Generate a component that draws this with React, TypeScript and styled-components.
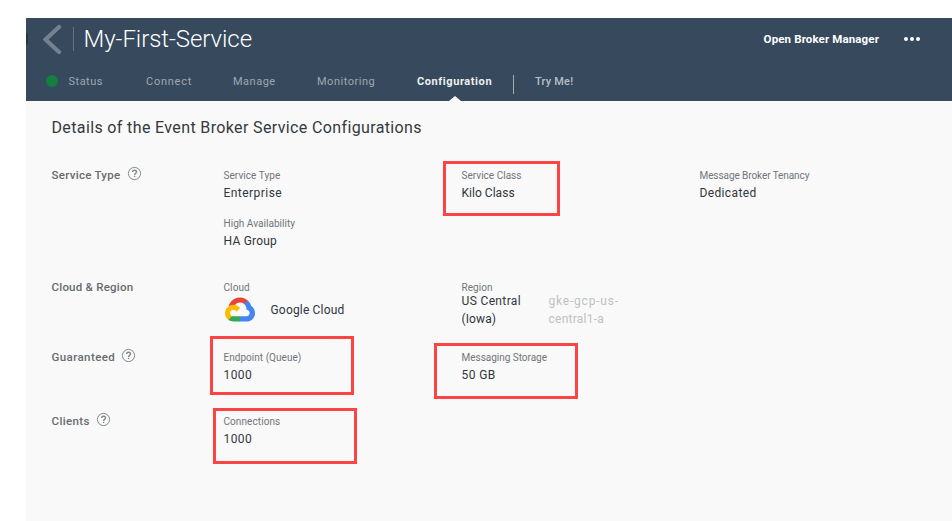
import React from "react";
import styled, { createGlobalStyle } from "styled-components";

const GlobalStyle = createGlobalStyle`
  * { box-sizing: border-box; }
  body { margin: 0; background: #fff; font-family: Roboto, "Open Sans", sans-serif; }
`;

const Page = styled.div`
  height: 521px;
  padding: 18px 0 0 26px;
  overflow: hidden;
  display: flex;
  flex-direction: column;
`;

const Header = styled.header`
  position: relative;
  flex: 0 0 83px;
  background: #36495d;
`;

const HandleDot = styled.span`
  position: absolute;
  left: 0;
  top: 15px;
  width: 2px;
  height: 12px;
  border-radius: 0 2px 2px 0;
  background: #2f3439;
`;

const TitleBar = styled.div`
  display: flex;
  align-items: center;
  height: 42px;
  padding: 0 32px 0 17px;
`;

const BackIcon = styled.svg`
  width: 19px;
  height: 30px;
  flex: none;
  fill: none;
  stroke: #738292;
  stroke-width: 4.2;
  stroke-linecap: round;
`;

const TitleRule = styled.span`
  width: 1px;
  height: 24px;
  margin: 0 9.5px 0 11px;
  background: #65727f;
`;

const Title = styled.h1`
  margin: 0;
  font-size: 24px;
  line-height: 30px;
  font-weight: 300;
  letter-spacing: -0.06px;
  color: #fff;
  white-space: nowrap;
`;

const ManagerLink = styled.a`
  margin-left: auto;
  font-size: 11.5px;
  line-height: 16px;
  font-weight: 700;
  letter-spacing: 0.13px;
  color: #fff;
  white-space: nowrap;
`;

const MoreIcon = styled.svg`
  width: 16px;
  height: 4px;
  margin-left: 25px;
  fill: #fff;
`;

const Tabs = styled.nav`
  display: flex;
  align-items: center;
  height: 41px;
  padding-left: 20px;
`;

const StatusDot = styled.span`
  width: 12px;
  height: 12px;
  margin: 1px 10.5px 0 0;
  border-radius: 50%;
  background: #13803d;
`;

const Tab = styled.a<{ $w: number; $ls: number; $tone?: "active" | "bright" }>`
  position: relative;
  flex: 0 0 ${(p) => p.$w}px;
  height: 100%;
  padding-top: 1px;
  font-size: 11px;
  line-height: 42px;
  letter-spacing: ${(p) => p.$ls}px;
  font-weight: ${(p) => (p.$tone === "active" ? 700 : p.$tone === "bright" ? 500 : 400)};
  color: ${(p) => (p.$tone === "active" ? "#eef0f2" : p.$tone === "bright" ? "#b9bfc5" : "#a0a7ae")};
  white-space: nowrap;
`;

const Caret = styled.svg`
  position: absolute;
  left: 32px;
  bottom: 0;
  width: 12px;
  height: 5px;
  fill: #f9f9f9;
`;

const TabRule = styled.span`
  width: 1px;
  height: 19px;
  margin: 7px 21px 0 0;
  background: #a3acb5;
`;

const Content = styled.main`
  flex: 1;
  padding: 17px 0 0 25.5px;
  background: #f9f9f9;
`;

const Heading = styled.h2`
  margin: 0 0 30px;
  font-size: 16px;
  line-height: 20px;
  font-weight: 400;
  letter-spacing: 0.365px;
  color: #333940;
`;

const Section = styled.section<{ $h: number }>`
  display: flex;
  height: ${(p) => p.$h}px;
`;

const SectionLabel = styled.div<{ $ls: number }>`
  display: flex;
  flex: 0 0 172px;
  font-size: 11.5px;
  line-height: 14px;
  font-weight: 500;
  letter-spacing: ${(p) => p.$ls}px;
  color: #666b70;
  white-space: nowrap;
`;

const HelpSvg = styled.svg`
  width: 13px;
  height: 13px;
  margin: -1px 0 0 7.2px;
  overflow: visible;
  fill: none;
  stroke: #85898d;
`;

const Fields = styled.div`
  display: grid;
  grid-template-columns: repeat(3, 238px);
  grid-auto-rows: 48px;
`;

const FieldBox = styled.div`
  position: relative;
`;

const FieldLabel = styled.div<{ $ls: number }>`
  font-size: 10px;
  line-height: 15px;
  letter-spacing: ${(p) => p.$ls}px;
  color: #70757a;
  white-space: nowrap;
`;

const FieldValue = styled.div<{ $ls: number }>`
  font-size: 12px;
  line-height: 18px;
  letter-spacing: ${(p) => p.$ls}px;
  color: #30363c;
  white-space: nowrap;
`;

const ValueSlot = styled.div`
  padding-top: 1px;
`;

const ProviderRow = styled.div`
  display: flex;
  align-items: center;
  height: 29px;
  gap: 16px;
  padding-left: 1px;
`;

const CloudLogo = styled.svg`
  width: 30px;
  height: 25px;
`;

const RegionRow = styled.div`
  display: flex;
  margin-top: -3px;
`;

const RegionName = styled.div`
  width: 87px;
`;

const RegionId = styled.div`
  ${FieldValue} { color: #bfc1c3; }
`;

const Highlight = styled.span<{ $x: number; $y: number; $w: number; $h: number }>`
  position: absolute;
  left: ${(p) => p.$x}px;
  top: ${(p) => p.$y}px;
  width: ${(p) => p.$w}px;
  height: ${(p) => p.$h}px;
  border: 3px solid #fc4444;
`;

const Help = () => (
  <HelpSvg viewBox="0 0 13 13">
    <circle cx="6.5" cy="6.5" r="6.1" />
    <path d="M4.6 5.1C4.6 2.6 8.5 2.6 8.5 5C8.5 6.4 6.6 6.4 6.6 7.9" strokeWidth="1.4" />
    <path d="M6.6 8.8V10.1" strokeWidth="1.4" />
  </HelpSvg>
);

type FieldProps = {
  label: string;
  labelLs?: number;
  value?: string;
  valueLs?: number;
  box?: [number, number, number, number];
  children?: React.ReactNode;
};

const Field = ({ label, labelLs = 0.06, value, valueLs = 0.3, box, children }: FieldProps) => (
  <FieldBox>
    <FieldLabel $ls={labelLs}>{label}</FieldLabel>
    {value && (
      <ValueSlot>
        <FieldValue $ls={valueLs}>{value}</FieldValue>
      </ValueSlot>
    )}
    {children}
    {box && <Highlight $x={box[0]} $y={box[1]} $w={box[2]} $h={box[3]} />}
  </FieldBox>
);

const GoogleCloudLogo = () => (
  <CloudLogo viewBox="0 0 256 206">
    <path fill="#EA4335" d="M170.25 56.82L192.5 34.57L193.99 25.2C153.44-11.68 88.98-7.5 52.42 33.92C42.27 45.42 34.73 59.76 30.72 74.57L38.69 73.45L83.19 66.11L86.63 62.6C106.42 40.85 139.9 37.93 162.76 56.43Z" />
    <path fill="#4285F4" d="M224.2 73.92C219.09 55.08 208.59 38.15 193.99 25.2L162.76 56.43C175.94 67.2 183.46 83.44 183.13 100.47V106.01C198.49 106.01 210.93 118.45 210.93 133.81C210.93 149.16 198.49 161.29 183.13 161.29H127.46L122 167.22V200.56L127.46 205.8H183.13C223.06 206.11 255.69 174.3 256 134.37C256.19 110.17 244.25 87.48 224.2 73.92" />
    <path fill="#34A853" d="M71.87 205.8H127.46V161.29H71.87C67.91 161.29 64 160.44 60.39 158.79L52.31 161.27L29.97 183.52L28 191.08C40.57 200.57 55.93 205.87 71.87 205.8" />
    <path fill="#FBBC05" d="M71.87 61.43C31.94 61.66-.24 94.23 0 134.16C.13 156.46 10.55 177.45 28.23 191.04L60.47 158.79C46.48 152.47 40.26 136.01 46.58 122.01C52.91 108.02 69.37 101.8 83.36 108.12C89.53 110.91 94.47 115.85 97.25 122.01L129.5 89.76C115.78 71.83 94.45 61.35 71.87 61.43" />
  </CloudLogo>
);

export default function App() {
  return (
    <>
      <GlobalStyle />
      <Page>
        <Header>
          <HandleDot />
          <TitleBar>
            <BackIcon viewBox="0 0 19 30">
              <path d="M16 3L2.5 15.5L16 28" />
            </BackIcon>
            <TitleRule />
            <Title>My-First-Service</Title>
            <ManagerLink>Open Broker Manager</ManagerLink>
            <MoreIcon viewBox="0 0 16 4">
              <circle cx="2" cy="2" r="2" />
              <circle cx="8" cy="2" r="2" />
              <circle cx="14" cy="2" r="2" />
            </MoreIcon>
          </TitleBar>
          <Tabs>
            <StatusDot />
            <Tab $w={77.5} $ls={0.5}>Status</Tab>
            <Tab $w={87} $ls={0.75}>Connect</Tab>
            <Tab $w={84} $ls={0.5}>Manage</Tab>
            <Tab $w={100} $ls={0.52}>Monitoring</Tab>
            <Tab $w={96} $ls={0.58} $tone="active">
              Configuration
              <Caret viewBox="0 0 12 5"><path d="M0 5L6 0L12 5Z" /></Caret>
            </Tab>
            <TabRule />
            <Tab $w={50} $ls={0.2} $tone="bright">Try Me!</Tab>
          </Tabs>
        </Header>
        <Content>
          <Heading>Details of the Event Broker Service Configurations</Heading>
          <Section $h={112}>
            <SectionLabel $ls={0.29}>Service Type<Help /></SectionLabel>
            <Fields>
              <Field label="Service Type" value="Enterprise" valueLs={0.45} />
              <Field label="Service Class" labelLs={0.02} value="Kilo Class" valueLs={0.03} box={[-18.5, -7, 117, 55]} />
              <Field label="Message Broker Tenancy" labelLs={-0.08} value="Dedicated" valueLs={0.36} />
              <Field label="High Availability" labelLs={0.04} value="HA Group" valueLs={0.22} />
            </Fields>
          </Section>
          <Section $h={70}>
            <SectionLabel $ls={0.22}>Cloud &amp; Region</SectionLabel>
            <Fields>
              <Field label="Cloud" labelLs={0.1}>
                <ProviderRow>
                  <GoogleCloudLogo />
                  <FieldValue $ls={0.18}>Google Cloud</FieldValue>
                </ProviderRow>
              </Field>
              <Field label="Region">
                <RegionRow>
                  <RegionName>
                    <FieldValue $ls={0.36}>US Central</FieldValue>
                    <FieldValue $ls={0.1}>(Iowa)</FieldValue>
                  </RegionName>
                  <RegionId>
                    <FieldValue $ls={0.8}>gke-gcp-us-</FieldValue>
                    <FieldValue $ls={0.25}>central1-a</FieldValue>
                  </RegionId>
                </RegionRow>
              </Field>
            </Fields>
          </Section>
          <Section $h={64}>
            <SectionLabel $ls={0.42}>Guaranteed<Help /></SectionLabel>
            <Fields>
              <Field label="Endpoint (Queue)" labelLs={0.03} value="1000" valueLs={0.4} box={[-13.5, -14, 144, 59]} />
              <Field label="Messaging Storage" labelLs={-0.02} value="50 GB" valueLs={0.42} box={[-27.5, -7, 144, 56]} />
            </Fields>
          </Section>
          <Section $h={64}>
            <SectionLabel $ls={0.38}>Clients<Help /></SectionLabel>
            <Fields>
              <Field label="Connections" labelLs={0.08} value="1000" valueLs={0.4} box={[-10.5, -6, 144, 56]} />
            </Fields>
          </Section>
        </Content>
      </Page>
    </>
  );
}
